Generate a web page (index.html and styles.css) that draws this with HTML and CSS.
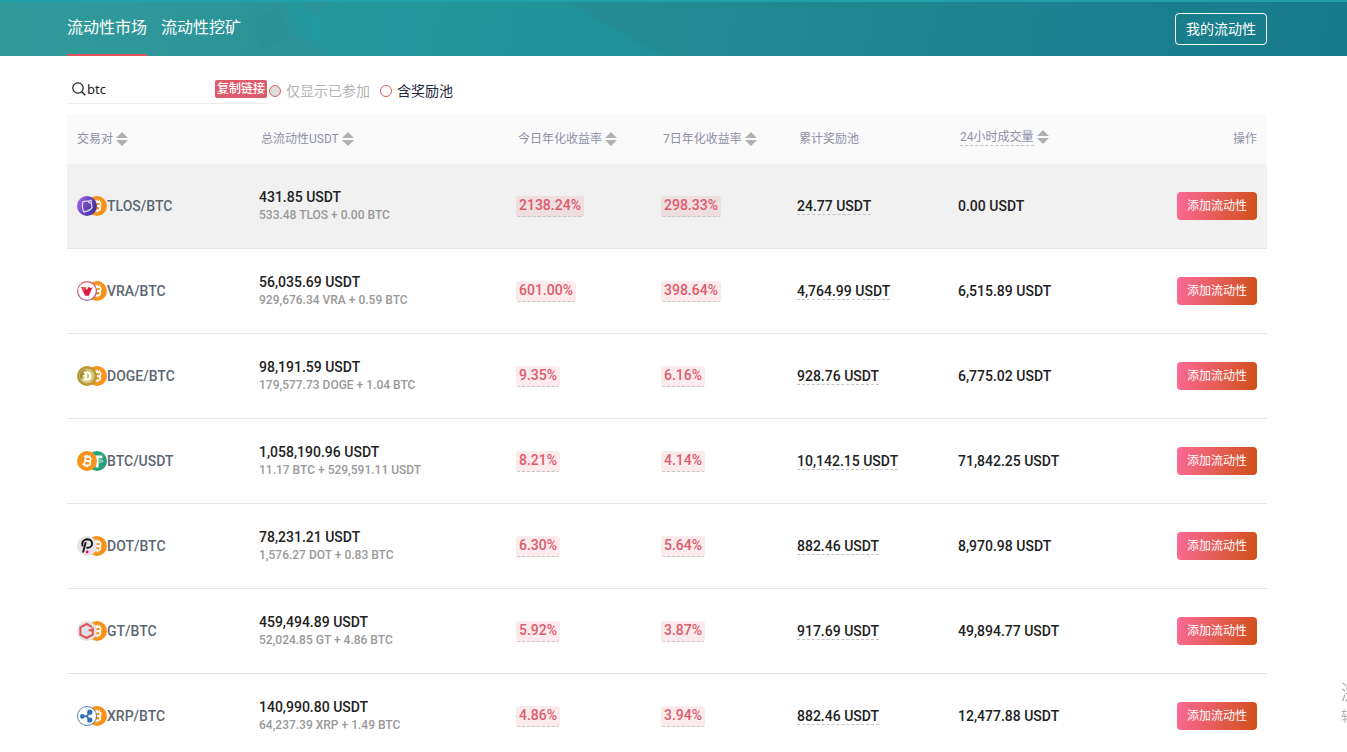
FILE: index.html
```
<!DOCTYPE html>
<html lang="zh-CN">
<head>
    <meta charset="UTF-8">
    <meta name="viewport" content="width=device-width, initial-scale=1.0">
    <title>流动性市场</title>
    <link rel="stylesheet" href="styles.css">
</head>
<body>
    <!-- shared icons -->
    <svg class="sprite" aria-hidden="true">
        <defs>
            <linearGradient id="g-tlos" x1="0" y1="0" x2="1" y2="0.4">
                <stop offset="0" stop-color="#a468ee" />
                <stop offset="1" stop-color="#45329a" />
            </linearGradient>
            <linearGradient id="g-vra" x1="0" y1="0" x2="1" y2="1">
                <stop offset="0" stop-color="#f0604f" />
                <stop offset="1" stop-color="#8a4fae" />
            </linearGradient>
        </defs>
        <symbol id="sort" viewBox="0 0 12 14">
            <path d="M6 0L12 6H0zM0 8H12L6 14z" fill="#b0b0b0" />
        </symbol>
        <symbol id="btc" viewBox="0 0 20 20">
            <circle cx="10" cy="10" r="10" fill="#f7931a" />
            <g transform="rotate(12 10 10)" fill="none" stroke="#fff" stroke-width="1.7">
                <path d="M6 5.8H11.2C14 5.8 14 9.8 11.2 9.8H8M11.2 9.8C14.6 9.8 14.6 14.2 11.4 14.2H6M8 5.8V14.2" />
                <path d="M9 3.8V6M11.4 3.8V6M9 14V16.2M11.4 14V16.2" stroke-width="1.2" />
            </g>
        </symbol>
        <symbol id="tlos" viewBox="0 0 20 20">
            <circle cx="10" cy="10" r="10" fill="url(#g-tlos)" />
            <path d="M5.6 5.8C8 4.8 10 5.4 11.5 5L14 4.2L15 11.6C13.6 14 10.4 15.4 6.6 15.8C5.4 13 5 9 5.6 5.8zM11.5 5C11.4 6.8 12.8 7.4 14.4 7" fill="none" stroke="#e4dafa" stroke-width="1.2" stroke-linejoin="round" />
        </symbol>
        <symbol id="vra" viewBox="0 0 20 20">
            <circle cx="10" cy="10" r="9.4" fill="#fff" stroke="url(#g-vra)" stroke-width="1.1" />
            <path d="M4 6H8.2L9.8 9L12 5.6L13.2 7L15.4 6.4L11.8 14.8H8.2z" fill="#e3173e" />
            <path d="M4 6H8.2L9 7.6L6.2 9.4z" fill="#f0544c" />
        </symbol>
        <symbol id="doge" viewBox="0 0 20 20">
            <circle cx="10" cy="10" r="10" fill="#b59a31" />
            <circle cx="10" cy="10" r="7.6" fill="#d6c680" />
            <path d="M3.4 7C5 4 8 3.4 9.4 4L6 10L4 14C2.8 12 2.6 9 3.4 7z" fill="#a58a38" />
            <path d="M6.6 5.4H10.6C16 5.4 16 14.6 10.6 14.6H6.6V12.8H7.6V10.6H5.8V9.2H7.6V7.2H6.6zM9.8 7.4V12.6C13.2 13 13.2 7 9.8 7.4z" fill="#fffdf0" fill-rule="evenodd" />
        </symbol>
        <symbol id="usdt" viewBox="0 0 20 20">
            <circle cx="10" cy="10" r="10" fill="#26a17b" />
            <path d="M4.6 4.4H15.4V7.2H11.6V16.4H8.6V7.2H4.6z" fill="#fff" />
            <path d="M11.6 9C14.4 9.1 16 9.6 16 10.2C16 10.8 14 11.3 11.6 11.4" fill="none" stroke="#fff" stroke-width="0.8" />
        </symbol>
        <symbol id="dot" viewBox="0 0 20 20">
            <circle cx="10" cy="10" r="10" fill="#e4e4e6" />
            <path d="M6.2 15.8L8.6 6.8M5.4 9.6C4.4 4.8 8 3.2 10.6 3.2C16.8 3.6 16.4 12 10.2 11.8" fill="none" stroke="#15151a" stroke-width="1.9" stroke-linecap="round" />
            <circle cx="10.2" cy="16" r="1.4" fill="#e6007a" />
        </symbol>
        <symbol id="gt" viewBox="0 0 20 20">
            <circle cx="10" cy="10" r="10" fill="#e2e2e4" />
            <path d="M15 6.2L9.6 3L3.4 6.4V13.6L9.6 17L15.8 13.6V9.2H11.6" fill="none" stroke="#de5658" stroke-width="2" />
            <path d="M11.6 9.8L16.8 6V11z" fill="#de5658" />
        </symbol>
        <symbol id="xrp" viewBox="0 0 20 20">
            <circle cx="10" cy="10" r="9.5" fill="#fff" stroke="#3f7cb0" stroke-width="0.9" />
            <path d="M5.4 10.4H9.6L13 6.6M9.6 10.4L12.8 13.8" fill="none" stroke="#2f73ac" stroke-width="1.8" />
            <circle cx="5.4" cy="10.4" r="2.4" fill="#2f73ac" />
            <circle cx="12.8" cy="6.2" r="2.6" fill="#2f73ac" />
            <circle cx="12.8" cy="14" r="2.6" fill="#2f73ac" />
        </symbol>
    </svg>

    <header class="header">
        <svg class="header-bg" viewBox="0 0 1347 54" preserveAspectRatio="none" aria-hidden="true">
            <path d="M330 0H567L663 54H330C310 40 300 20 330 0z" fill="#18a4a8" fill-opacity="0.25" />
            <path d="M284 0H304L320 20V40L296 34z" fill="#10a5ad" fill-opacity="0.25" />
            <path d="M254 20L276 6L290 32L260 52z" fill="#14808a" fill-opacity="0.08" />
        </svg>
        <nav class="tabs">
            <a class="tab active" href="#market">流动性市场</a>
            <a class="tab" href="#mining">流动性挖矿</a>
        </nav>
        <button class="my-btn" type="button">我的流动性</button>
    </header>

    <main class="container">
        <form class="filter">
            <div class="search">
                <svg class="search-icon" viewBox="0 0 14 14" aria-hidden="true">
                    <circle cx="6" cy="6" r="5.2" fill="none" stroke="#222" stroke-width="1.2" />
                    <path d="M9.8 9.8L13.2 13.2" stroke="#222" stroke-width="1.4" />
                </svg>
                <input class="search-input" type="text" value="btc" aria-label="搜索">
                <button class="copy-btn" type="button">复制链接</button>
            </div>
            <label class="check disabled"><input type="radio" name="joined" disabled>仅显示已参加</label>
            <label class="check"><input type="radio" name="reward">含奖励池</label>
        </form>

        <table class="pool-table">
            <colgroup>
                <col class="col-pair">
                <col class="col-total">
                <col class="col-today">
                <col class="col-week">
                <col class="col-reward">
                <col class="col-volume">
                <col class="col-action">
            </colgroup>
            <thead>
                <tr>
                    <th>交易对<svg class="sort"><use href="#sort" /></svg></th>
                    <th>总流动性USDT<svg class="sort"><use href="#sort" /></svg></th>
                    <th>今日年化收益率<svg class="sort"><use href="#sort" /></svg></th>
                    <th>7日年化收益率<svg class="sort"><use href="#sort" /></svg></th>
                    <th>累计奖励池</th>
                    <th><span class="dashed">24小时成交量</span><svg class="sort"><use href="#sort" /></svg></th>
                    <th class="action">操作</th>
                </tr>
            </thead>
            <tbody>
                <tr class="hover">
                    <td><div class="pair"><svg class="coin"><use href="#tlos" /></svg><svg class="coin back"><use href="#btc" /></svg><span>TLOS/BTC</span></div></td>
                    <td><div class="total">431.85 USDT</div><div class="detail">533.48 TLOS + 0.00 BTC</div></td>
                    <td><span class="rate">2138.24%</span></td>
                    <td><span class="rate">298.33%</span></td>
                    <td><span class="dashed">24.77 USDT</span></td>
                    <td>0.00 USDT</td>
                    <td class="action"><button class="add-btn" type="button">添加流动性</button></td>
                </tr>
                <tr>
                    <td><div class="pair"><svg class="coin"><use href="#vra" /></svg><svg class="coin back"><use href="#btc" /></svg><span>VRA/BTC</span></div></td>
                    <td><div class="total">56,035.69 USDT</div><div class="detail">929,676.34 VRA + 0.59 BTC</div></td>
                    <td><span class="rate">601.00%</span></td>
                    <td><span class="rate">398.64%</span></td>
                    <td><span class="dashed">4,764.99 USDT</span></td>
                    <td>6,515.89 USDT</td>
                    <td class="action"><button class="add-btn" type="button">添加流动性</button></td>
                </tr>
                <tr>
                    <td><div class="pair"><svg class="coin"><use href="#doge" /></svg><svg class="coin back"><use href="#btc" /></svg><span>DOGE/BTC</span></div></td>
                    <td><div class="total">98,191.59 USDT</div><div class="detail">179,577.73 DOGE + 1.04 BTC</div></td>
                    <td><span class="rate">9.35%</span></td>
                    <td><span class="rate">6.16%</span></td>
                    <td><span class="dashed">928.76 USDT</span></td>
                    <td>6,775.02 USDT</td>
                    <td class="action"><button class="add-btn" type="button">添加流动性</button></td>
                </tr>
                <tr>
                    <td><div class="pair"><svg class="coin"><use href="#btc" /></svg><svg class="coin back"><use href="#usdt" /></svg><span>BTC/USDT</span></div></td>
                    <td><div class="total">1,058,190.96 USDT</div><div class="detail">11.17 BTC + 529,591.11 USDT</div></td>
                    <td><span class="rate">8.21%</span></td>
                    <td><span class="rate">4.14%</span></td>
                    <td><span class="dashed">10,142.15 USDT</span></td>
                    <td>71,842.25 USDT</td>
                    <td class="action"><button class="add-btn" type="button">添加流动性</button></td>
                </tr>
                <tr>
                    <td><div class="pair"><svg class="coin"><use href="#dot" /></svg><svg class="coin back"><use href="#btc" /></svg><span>DOT/BTC</span></div></td>
                    <td><div class="total">78,231.21 USDT</div><div class="detail">1,576.27 DOT + 0.83 BTC</div></td>
                    <td><span class="rate">6.30%</span></td>
                    <td><span class="rate">5.64%</span></td>
                    <td><span class="dashed">882.46 USDT</span></td>
                    <td>8,970.98 USDT</td>
                    <td class="action"><button class="add-btn" type="button">添加流动性</button></td>
                </tr>
                <tr>
                    <td><div class="pair"><svg class="coin"><use href="#gt" /></svg><svg class="coin back"><use href="#btc" /></svg><span>GT/BTC</span></div></td>
                    <td><div class="total">459,494.89 USDT</div><div class="detail">52,024.85 GT + 4.86 BTC</div></td>
                    <td><span class="rate">5.92%</span></td>
                    <td><span class="rate">3.87%</span></td>
                    <td><span class="dashed">917.69 USDT</span></td>
                    <td>49,894.77 USDT</td>
                    <td class="action"><button class="add-btn" type="button">添加流动性</button></td>
                </tr>
                <tr>
                    <td><div class="pair"><svg class="coin"><use href="#xrp" /></svg><svg class="coin back"><use href="#btc" /></svg><span>XRP/BTC</span></div></td>
                    <td><div class="total">140,990.80 USDT</div><div class="detail">64,237.39 XRP + 1.49 BTC</div></td>
                    <td><span class="rate">4.86%</span></td>
                    <td><span class="rate">3.94%</span></td>
                    <td><span class="dashed">882.46 USDT</span></td>
                    <td>12,477.88 USDT</td>
                    <td class="action"><button class="add-btn" type="button">添加流动性</button></td>
                </tr>
            </tbody>
        </table>
    </main>

    <!-- system notice, runs off the right edge -->
    <div class="watermark">
        <div class="watermark-title">激</div>
        <div class="watermark-text">转</div>
    </div>
</body>
</html>
```
FILE: styles.css
```
* {
    box-sizing: border-box;
}

body {
    margin: 0;
    min-height: 100vh;
    overflow: hidden;
    background: #fff;
    color: #222;
    font-family: Roboto, "Noto Sans CJK SC", sans-serif;
    font-size: 14px;
}

a {
    color: inherit;
    text-decoration: none;
}

button {
    padding: 0;
    border: none;
    font-family: inherit;
    cursor: pointer;
}

.sprite {
    position: absolute;
    width: 0;
    height: 0;
}

/* header */
.header {
    position: relative;
    display: flex;
    justify-content: space-between;
    align-items: center;
    height: 56px;
    padding: 0 80px 0 67px;
    border-top: 2px solid #22a0aa;
    background: linear-gradient(100deg, #319a9b, #208891 60%, #167a8b);
    color: #fff;
}

.header-bg {
    position: absolute;
    top: 0;
    left: 0;
    width: 100%;
    height: 100%;
}

.tabs {
    position: relative;
    display: flex;
    gap: 14px;
    height: 100%;
}

.tab {
    font-size: 16px;
    line-height: 52px;
}

.tab.active {
    border-bottom: 2px solid #de5359;
}

.my-btn {
    position: relative;
    height: 32px;
    padding: 0 10px 3px;
    border: 1px solid #fff;
    border-radius: 4px;
    background: transparent;
    color: #fff;
    font-size: 14px;
}

/* search and filters */
.container {
    padding: 18px 80px 0 67px;
}

.filter {
    display: flex;
    align-items: center;
    margin-bottom: 10px;
}

.search {
    display: flex;
    align-items: center;
    width: 200px;
    height: 30px;
    padding-left: 5px;
    border-bottom: 1px solid #eee;
}

.search-icon {
    flex: none;
    width: 14px;
    height: 14px;
}

.search-input {
    flex: 1;
    min-width: 0;
    padding: 0 1px;
    border: none;
    outline: none;
    background: transparent;
    color: #222;
    font-family: "Noto Sans", sans-serif;
    font-size: 13px;
}

.copy-btn {
    height: 18px;
    padding: 0 2px;
    border-radius: 2px;
    background: #de5b6c;
    color: #fff;
    font-size: 12px;
    font-weight: 500;
    line-height: 16px;
}

.check {
    display: flex;
    align-items: center;
    gap: 5px;
    margin: 3px 8px 0 2px;
    color: #23283c;
    line-height: 20px;
}

.check input {
    appearance: none;
    width: 12px;
    height: 12px;
    margin: 0;
    border: 1px solid #de5b5f;
    border-radius: 50%;
    background: #fff;
}

.check.disabled {
    color: #b4b4b4;
}

.check.disabled input {
    background: #ddd;
}

/* pool table */
.pool-table {
    width: 100%;
    border-spacing: 0;
    table-layout: fixed;
}

.col-pair {
    width: 182px;
}

.col-total {
    width: 257px;
}

.col-today {
    width: 145px;
}

.col-week {
    width: 136px;
}

.col-reward,
.col-volume {
    width: 161px;
}

.pool-table th {
    height: 50px;
    padding: 0 0 3px 12px;
    background: #fafafa;
    color: #8e90a5;
    font-size: 12px;
    font-weight: 400;
    text-align: left;
    white-space: nowrap;
}

.pool-table th:first-child {
    padding-left: 10px;
}

.pool-table td {
    height: 85px;
    padding: 0 0 0 10px;
    border-bottom: 1px solid #e6e6e6;
    color: #222;
    font-weight: 500;
    white-space: nowrap;
}

.pool-table .hover td {
    background: #f1f1f1;
}

.pool-table .action {
    padding-right: 10px;
    text-align: right;
}

.sort {
    width: 12px;
    height: 14px;
    margin-left: 3px;
    vertical-align: -3px;
}

.dashed {
    display: inline-block;
    border-bottom: 1px dashed #c4c4c4;
    line-height: 16px;
}

.pair {
    display: flex;
    align-items: center;
}

.pair span {
    padding-bottom: 1px;
    color: #5c6670;
}

.coin {
    position: relative;
    z-index: 1;
    flex: none;
    width: 20px;
    height: 20px;
}

.coin.back {
    z-index: 0;
    margin-left: -10px;
}

.total {
    line-height: 18px;
}

.detail {
    color: #999;
    font-size: 12px;
    line-height: 18px;
}

.rate {
    display: inline-block;
    padding: 0 3px 1px;
    border-bottom: 1px dashed #c4c4c4;
    border-radius: 3px;
    background: rgba(222, 91, 108, 0.12);
    color: #de5b6c;
    line-height: 19px;
}

.add-btn {
    width: 80px;
    height: 28px;
    padding-bottom: 3px;
    border-radius: 4px;
    background: linear-gradient(100deg, #fb6a96, #d04f17);
    color: #fff;
    font-size: 12px;
    vertical-align: middle;
}

/* only the first strokes are visible at the window edge */
.watermark {
    position: fixed;
    bottom: 26px;
    left: calc(100% - 6px);
    color: #b4b4b4;
    white-space: nowrap;
}

.watermark-title {
    font-size: 20px;
    line-height: 26px;
}

.watermark-text {
    font-size: 14px;
    line-height: 20px;
}
```
